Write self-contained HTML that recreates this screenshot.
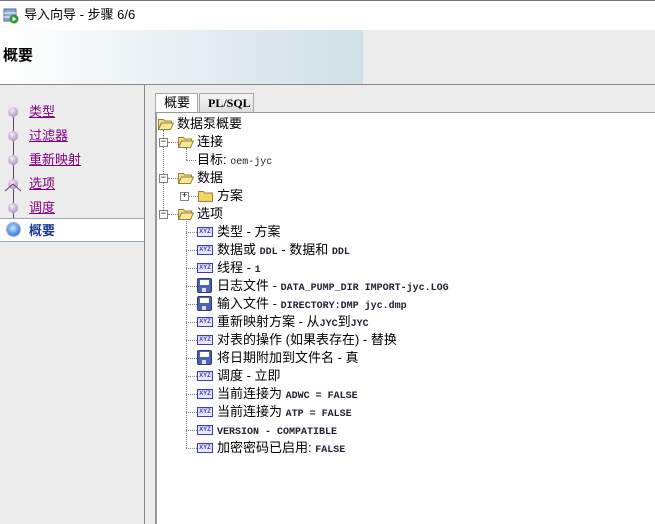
<!DOCTYPE html>
<html><head><meta charset="utf-8"><style>
*{margin:0;padding:0;box-sizing:border-box}
body{width:655px;height:524px;position:relative;overflow:hidden;background:#ececec;font-family:"Liberation Sans","Noto Sans CJK SC",sans-serif;font-size:13px;color:#000}
.a{position:absolute}
.t{position:absolute;white-space:nowrap;line-height:16px}
.m{font-family:"Liberation Mono","Noto Sans CJK SC",monospace;font-size:10px;font-weight:bold;color:#223}
.nav{position:absolute;left:29px;color:#800080;text-decoration:underline;font-size:13px;line-height:16px}
.dot{position:absolute;left:8px;width:10px;height:10px;border-radius:50%;background:radial-gradient(circle at 40% 35%,#f4eaf6,#b79ac4 70%,#8a6a9a)}
.hl{position:absolute;border-top:1px dotted #808080;height:0}
.vl{position:absolute;border-left:1px dotted #808080;width:0}
.xyz{position:absolute;width:16px;height:10px;border:1px solid #3a3ac0;background:#e8e8ff;font:bold 6px "Liberation Sans",sans-serif;color:#3a3ac0;text-align:center;line-height:8px}
.disk{position:absolute;width:15px;height:15px;background:#4a62b8;border:1px solid #2a3a80;border-radius:2px}
.disk:before{content:"";position:absolute;left:2px;top:1px;width:9px;height:5px;background:#fff}
.disk:after{content:"";position:absolute;left:4px;top:9px;width:4px;height:4px;background:#dde}
.fo{position:absolute;width:16px;height:12px}
.tg{position:absolute;width:9px;height:9px;border:1px solid #808080;background:#fff;font:9px/7px "Liberation Mono",monospace;text-align:center;color:#000}
</style></head><body>
<div class="a" style="left:0;top:0;width:655px;height:30px;background:#fff;border-top:1px solid #777"></div>
<svg class="a" style="left:3px;top:8px" width="16" height="16"><rect x="1" y="1" width="12" height="12" fill="#8aa8d0" stroke="#4a6a9a"/><line x1="1" y1="5" x2="13" y2="5" stroke="#fff"/><line x1="1" y1="9" x2="13" y2="9" stroke="#fff"/><circle cx="11" cy="11" r="4.5" fill="#2a9a30"/><path d="M9.5 8.5 L13.5 11 L9.5 13.5Z" fill="#fff"/></svg>
<div class="t" style="left:24px;top:7px;font-size:13px">导入向导 - 步骤 6/6</div>
<div class="a" style="left:0;top:30px;width:363px;height:54px;background:linear-gradient(90deg,#fff,#cfdfe6)"></div>
<div class="t" style="left:3px;top:48px;font-size:15px;font-weight:bold">概要</div>
<div class="a" style="left:0;top:84px;width:655px;height:1px;background:#888"></div>
<div class="a" style="left:144px;top:85px;width:1px;height:439px;background:#888"></div>
<div class="vl" style="left:13px;top:117px;height:108px;border-left:1px solid #6a3a7a"></div>
<div class="dot" style="top:107px"></div><a class="nav" style="top:104px">类型</a>
<div class="dot" style="top:131px"></div><a class="nav" style="top:128px">过滤器</a>
<div class="dot" style="top:155px"></div><a class="nav" style="top:152px">重新映射</a>
<div class="dot" style="top:179px"></div><svg class="a" style="left:4px;top:180px" width="20" height="12"><path d="M1 11 L9 4 M17 11 L9 4" stroke="#6a3a7a"/></svg><a class="nav" style="top:176px">选项</a>
<div class="dot" style="top:203px"></div><a class="nav" style="top:200px">调度</a>
<div class="a" style="left:0;top:218px;width:144px;height:24px;background:#fff;border-top:1px solid #9ab;border-bottom:1px solid #9ab"></div>
<div class="a" style="left:7px;top:223px;width:13px;height:13px;border-radius:50%;background:radial-gradient(circle at 45% 40%,#cfe6ff,#4a8ee0 60%,#2a5aa0);box-shadow:0 0 0 1px #aac"></div>
<div class="t" style="left:29px;top:223px;color:#1a3a9a;font-weight:bold">概要</div>
<div class="a" style="left:155px;top:93px;width:43px;height:20px;background:#fff;border:1px solid #aaa;border-bottom:none"></div>
<div class="t" style="left:164px;top:95px">概要</div>
<div class="a" style="left:199px;top:93px;width:55px;height:19px;background:linear-gradient(#f6f6f6,#ddd);border:1px solid #aaa;border-bottom:none"></div>
<div class="t" style="left:208px;top:95px;font-family:'Liberation Serif',serif;font-size:12px;font-weight:bold">PL/SQL</div>
<div class="a" style="left:155px;top:112px;width:500px;height:412px;background:#fff;border-left:2px solid #999;border-top:1px solid #999"></div>

<svg width="0" height="0" style="position:absolute"><defs><symbol id="f" viewBox="0 0 16 12"><path d="M0.5 1.5h5l1 1.5h7v2H3.5L0.5 11Z" fill="#f0e090" stroke="#9a8030"/><path d="M0.5 11.5L3.5 5h12l-3 6.5Z" fill="#f8e898" stroke="#9a8030"/></symbol><symbol id="c" viewBox="0 0 16 12"><path d="M0.5 1.5h5l1 1.5h8v8.5H0.5Z" fill="#f0d860" stroke="#9a8030"/></symbol></defs></svg>

<svg class="fo" style="left:158px;top:118px"><use href="#f"/></svg><div class="t" style="left:177px;top:116px">数据泵概要</div>
<div class="vl" style="left:163px;top:130px;height:84px"></div>
<div class="hl" style="left:168px;top:142px;width:10px"></div><div class="tg" style="left:159px;top:138px">−</div>
<svg class="fo" style="left:178px;top:136px"><use href="#f"/></svg><div class="t" style="left:197px;top:134px">连接</div>
<div class="vl" style="left:186px;top:148px;height:12px"></div><div class="hl" style="left:186px;top:160px;width:10px"></div>
<div class="t" style="left:197px;top:152px">目标: <span class="m" style="font-weight:normal">oem-jyc</span></div>
<div class="hl" style="left:168px;top:178px;width:10px"></div><div class="tg" style="left:159px;top:174px">−</div>
<svg class="fo" style="left:178px;top:172px"><use href="#f"/></svg><div class="t" style="left:197px;top:170px">数据</div>
<div class="hl" style="left:188px;top:196px;width:10px"></div><div class="tg" style="left:180px;top:192px">+</div>
<svg class="fo" style="left:198px;top:190px"><use href="#c"/></svg><div class="t" style="left:217px;top:188px">方案</div>
<div class="hl" style="left:168px;top:214px;width:10px"></div><div class="tg" style="left:159px;top:210px">−</div>
<svg class="fo" style="left:178px;top:208px"><use href="#f"/></svg><div class="t" style="left:197px;top:206px">选项</div>
<div class="vl" style="left:186px;top:221px;height:227px"></div>

<div class="hl" style="left:186px;top:232px;width:11px"></div><div class="xyz" style="left:197px;top:227px">XYZ</div><div class="t" style="left:217px;top:224px">类型 - 方案</div>
<div class="hl" style="left:186px;top:250px;width:11px"></div><div class="xyz" style="left:197px;top:245px">XYZ</div><div class="t" style="left:217px;top:242px">数据或 <span class="m">DDL</span> - 数据和 <span class="m">DDL</span></div>
<div class="hl" style="left:186px;top:268px;width:11px"></div><div class="xyz" style="left:197px;top:263px">XYZ</div><div class="t" style="left:217px;top:260px">线程 - <span class="m">1</span></div>
<div class="hl" style="left:186px;top:286px;width:11px"></div><div class="disk" style="left:197px;top:278px"></div><div class="t" style="left:217px;top:278px">日志文件 - <span class="m">DATA_PUMP_DIR IMPORT-jyc.LOG</span></div>
<div class="hl" style="left:186px;top:304px;width:11px"></div><div class="disk" style="left:197px;top:296px"></div><div class="t" style="left:217px;top:296px">输入文件 - <span class="m">DIRECTORY:DMP jyc.dmp</span></div>
<div class="hl" style="left:186px;top:322px;width:11px"></div><div class="xyz" style="left:197px;top:317px">XYZ</div><div class="t" style="left:217px;top:314px">重新映射方案 - 从<span class="m">JYC</span>到<span class="m">JYC</span></div>
<div class="hl" style="left:186px;top:340px;width:11px"></div><div class="xyz" style="left:197px;top:335px">XYZ</div><div class="t" style="left:217px;top:332px">对表的操作 (如果表存在) - 替换</div>
<div class="hl" style="left:186px;top:358px;width:11px"></div><div class="disk" style="left:197px;top:350px"></div><div class="t" style="left:217px;top:350px">将日期附加到文件名 - 真</div>
<div class="hl" style="left:186px;top:376px;width:11px"></div><div class="xyz" style="left:197px;top:371px">XYZ</div><div class="t" style="left:217px;top:368px">调度 - 立即</div>
<div class="hl" style="left:186px;top:394px;width:11px"></div><div class="xyz" style="left:197px;top:389px">XYZ</div><div class="t" style="left:217px;top:386px">当前连接为 <span class="m">ADWC = FALSE</span></div>
<div class="hl" style="left:186px;top:412px;width:11px"></div><div class="xyz" style="left:197px;top:407px">XYZ</div><div class="t" style="left:217px;top:404px">当前连接为 <span class="m">ATP = FALSE</span></div>
<div class="hl" style="left:186px;top:430px;width:11px"></div><div class="xyz" style="left:197px;top:425px">XYZ</div><div class="t" style="left:217px;top:422px"><span class="m">VERSION - COMPATIBLE</span></div>
<div class="hl" style="left:186px;top:448px;width:11px"></div><div class="xyz" style="left:197px;top:443px">XYZ</div><div class="t" style="left:217px;top:440px">加密密码已启用: <span class="m">FALSE</span></div>
</body></html>
